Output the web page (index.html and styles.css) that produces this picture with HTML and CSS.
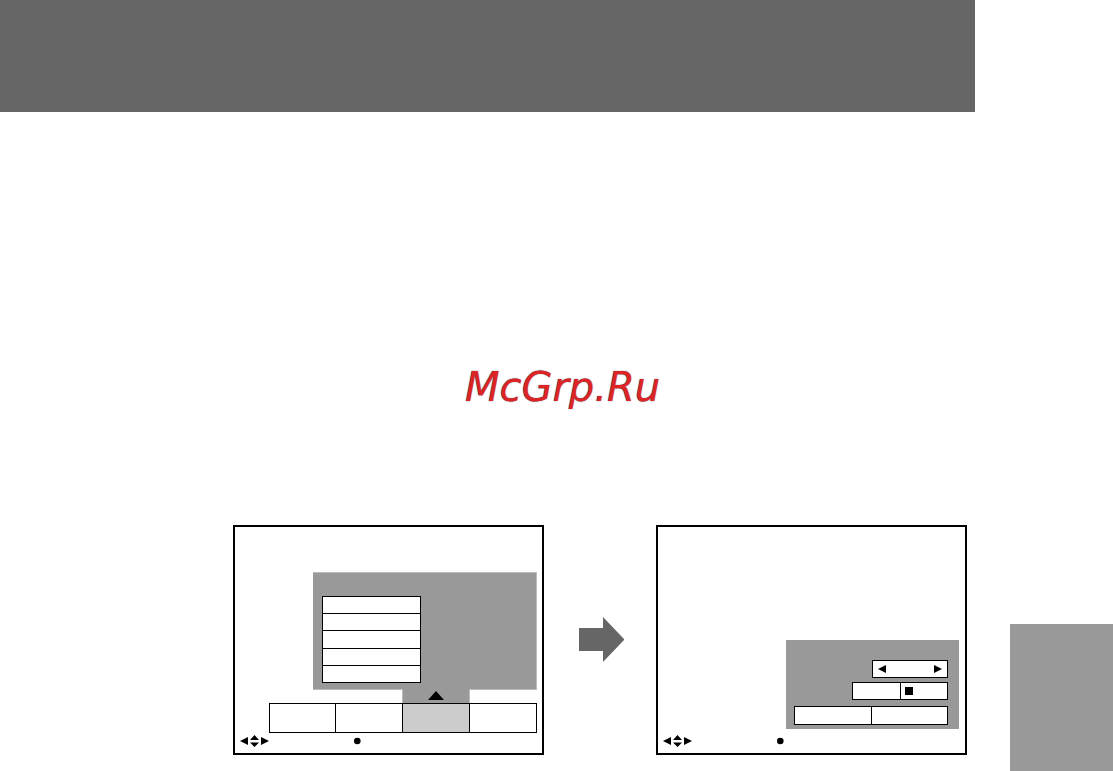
FILE: index.html
```html
<!DOCTYPE html>
<html lang="en">
<head>
<meta charset="utf-8">
<title>McGrp.Ru</title>
<link rel="stylesheet" href="styles.css">
</head>
<body>
<div class="page">
  <header class="banner"></header>
  <p class="brand">McGrp.Ru</p>
  <main class="figures">
    <section class="screen">
      <div class="panel">
        <ul class="list"><li></li><li></li><li></li><li></li><li></li></ul>
      </div>
      <div class="tabs">
        <div class="connector">
          <svg width="16" height="9" viewBox="0 0 16 9"><path d="M8 0L16 9H0Z"/></svg>
        </div>
        <div class="tab"></div>
        <div class="tab"></div>
        <div class="tab tab-active"></div>
        <div class="tab"></div>
      </div>
      <div class="hints">
        <svg width="29" height="13" viewBox="0 0 29 13"><path d="M0 6L8 2V10ZM29 6L21 2V10ZM14.500 0L19 5H10ZM14.500 12L19 7.500H10Z"/></svg>
        <svg width="7" height="13" viewBox="0 0 7 13"><circle cx="3.300" cy="6" r="3.300"/></svg>
      </div>
    </section>
    <svg class="arrow" width="45" height="45" viewBox="0 0 45 45"><path d="M0 11H24V0L45.500 22.500L24 45V34H0Z"/></svg>
    <section class="screen">
      <div class="panel dialog">
        <div class="field stepper">
          <svg width="8" height="8" viewBox="0 0 8 8"><path d="M0 4L8 0V8Z"/></svg>
          <svg width="8" height="8" viewBox="0 0 8 8"><path d="M8 4L0 0V8Z"/></svg>
        </div>
        <div class="field choice">
          <div class="cell"></div>
          <div class="cell"><span class="mark"></span></div>
        </div>
        <div class="field actions">
          <div class="cell"></div>
          <div class="cell"></div>
        </div>
      </div>
      <div class="hints">
        <svg width="29" height="13" viewBox="0 0 29 13"><path d="M0 6L8 2V10ZM29 6L21 2V10ZM14.500 0L19 5H10ZM14.500 12L19 7.500H10Z"/></svg>
        <svg width="7" height="13" viewBox="0 0 7 13"><circle cx="3.300" cy="6" r="3.300"/></svg>
      </div>
    </section>
  </main>
  <aside class="side-tab"></aside>
</div>
</body>
</html>
```
FILE: styles.css
```css
* {
  box-sizing: border-box;
}

body {
  margin: 0;
  background: #fff;
  font-family: "DejaVu Sans", sans-serif;
}

svg {
  display: block;
  flex: none;
}

.page {
  display: grid;
  grid-template-columns: 1fr 138px;
  grid-template-rows: 112px 1fr auto;
  min-height: 100vh;
}

.banner {
  background: #666;
}

.brand {
  grid-column: 1 / -1;
  grid-row: 2;
  margin: 0;
  padding: 251px 0 0 12px;
  text-align: center;
  font-size: 40px;
  line-height: 48px;
  font-style: italic;
  color: #dd2424;
  text-shadow: 0 0 1px #224;
}

.figures {
  grid-column: 1;
  grid-row: 3;
  display: flex;
  align-items: center;
  padding: 0 8px 16px 233px;
}

.screen {
  flex: 1;
  display: flex;
  flex-direction: column;
  min-height: 230px;
  border: 2px solid #000;
}

.panel {
  margin: 45px 5px 0 78px;
  padding: 23px 0 6px 9px;
  background: #999;
  border: 1px solid #bbb;
  border-left: 0;
}

.list {
  display: flex;
  flex-direction: column;
  width: 99px;
  height: 87px;
  margin: 0;
  padding: 0;
  list-style: none;
  background: #fff;
  border: 1px solid #000;
}

.list li {
  flex: 1;
}

.list li + li {
  border-top: 1px solid #000;
}

.tabs {
  display: grid;
  grid-template-columns: 66px 1fr 1fr 1fr;
  grid-template-rows: 14px 30px;
  margin: -1px 5px 0 34px;
  padding-right: 1px;
}

.connector {
  grid-column: 3;
  display: flex;
  justify-content: center;
  padding-top: 2px;
  margin-right: -1px;
  background: #999;
  border: solid #bbb;
  border-width: 0 1px;
}

.tab {
  grid-row: 2;
  margin-right: -1px;
  border: 1px solid #000;
}

.tab-active {
  background: #ccc;
}

.hints {
  display: flex;
  gap: 85px;
  margin-top: auto;
  padding: 0 5px 5px;
}

.arrow {
  margin: 0 32px 1px 35px;
  fill: #666;
}

.dialog {
  display: flex;
  flex-direction: column;
  align-items: flex-end;
  margin: 113px 6px 0 128px;
  padding: 20px 11px 4px 8px;
  border: 0;
}

.field {
  height: 18px;
  background: #fff;
  border: 1px solid #000;
}

.stepper {
  display: flex;
  align-items: center;
  justify-content: space-between;
  width: 76px;
  padding: 0 5px;
}

.choice,
.actions {
  display: grid;
  grid-template-columns: 1fr 1fr;
}

.choice {
  width: 96px;
  margin: 4px 0 6px;
}

.actions {
  width: 100%;
  height: 19px;
}

.cell {
  display: flex;
  align-items: center;
}

.cell + .cell {
  padding-left: 4px;
  border-left: 1px solid #000;
}

.mark {
  width: 8px;
  height: 8px;
  background: #000;
}

.side-tab {
  grid-column: 2;
  grid-row: 3;
  align-self: end;
  height: 147px;
  margin-left: 35px;
  background: #999;
}
```
